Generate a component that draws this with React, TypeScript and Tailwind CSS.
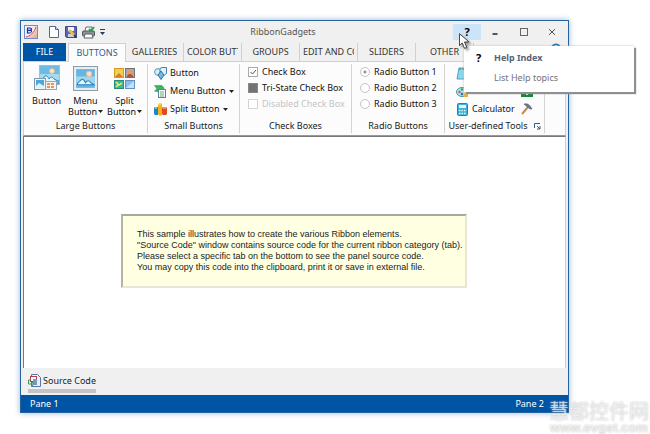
import type { ReactNode } from "react";

function PictureIcon({ className }: { className: string }) {
  return (
    <svg className={className} viewBox="0 0 24 24">
      <rect x="0.5" y="0.5" width="23" height="23" fill="#e9eef2" stroke="#8e9eac" />
      <rect x="3" y="3" width="18" height="18" fill="#63b5e2" />
      <rect x="3" y="10" width="18" height="7" fill="#9ed6ee" />
      <circle cx="15.5" cy="7.500" r="2.500" fill="#fbe3c4" stroke="#f2b99a" />
      <path d="M4 18c0-3 3-3 4-5 2-1 3 1 4 3 2-3 4-2 5 0l3 2z" fill="#e8f6fb" stroke="#2f83bd" />
    </svg>
  );
}

function StackedPicturesIcon() {
  return (
    <svg className="h-[26px] w-[26px]" viewBox="0 0 26 26">
      <rect x="5.5" y="0.5" width="20" height="19" fill="#6bbbe5" stroke="#a9bccb" />
      <rect x="6" y="9" width="19" height="6" fill="#a5daf0" />
      <circle cx="18" cy="6" r="2.5" fill="#fbe8c8" stroke="#f0b697" />
      <path d="M7 16c0-3 3-2 4-5 2-1 3 1 4 3 2-3 4-2 5 0l4 2v3H7z" fill="#e5f4fa" stroke="#2f83bd" />
      <rect x="0.5" y="13.5" width="11" height="11" fill="#eef5f9" stroke="#8299ad" />
      <path d="M2 15h8v8H2z" fill="#4fa6d8" />
      <path d="M2 21l3-3 5 3v2H2z" fill="#dff2fa" />
      <rect x="11.5" y="16.5" width="11" height="8" fill="#f7f4f0" stroke="#9aa7b3" />
      <path d="M13 19h7M13 22h7" stroke="#e3975f" strokeWidth="2" strokeDasharray="3 1" />
    </svg>
  );
}

function GalleryIcon() {
  return (
    <svg className="h-[23px] w-[23px]" viewBox="0 0 23 23">
      <rect x="1.5" y="1.5" width="9" height="9" fill="#f6cc4f" stroke="#d69a20" />
      <path d="M2 10l4-4 4 4z" fill="#d67c2e" />
      <rect x="12.5" y="1.5" width="9" height="9" fill="#a9aaa8" stroke="#77706b" />
      <circle cx="17" cy="5" r="2" fill="#ee9a51" />
      <path d="M14 10c0-4 6-4 6 0z" fill="#b94d30" />
      <rect x="1.5" y="13.5" width="9" height="8" fill="#43b597" stroke="#258d79" />
      <path d="M3 15l3 3 3-2M3 20l2-2" stroke="#f2e779" fill="none" strokeWidth="1.5" />
      <rect x="12.5" y="13.5" width="9" height="8" fill="#8bbdea" stroke="#628fc7" />
      <path d="M13 21l8-7v7z" fill="#c7e1f7" />
    </svg>
  );
}

function ShapesIcon() {
  return (
    <svg className="size-[13px]" viewBox="0 0 13 13">
      <circle cx="4" cy="5" r="3.4" fill="#d9eef8" stroke="#5797c0" />
      <path d="M6 1.5l2-1h4.500v6l-2 1.500H6z" fill="#e1f2fa" stroke="#3f83b3" />
      <path d="M7 4l3 4-3 4.500L4 8z" fill="#76b8e0" stroke="#316fa4" />
    </svg>
  );
}

function SheetIcon() {
  return (
    <svg className="size-[13px]" viewBox="0 0 13 13">
      <path d="M0.500 0.500H8L10 3v2H5v2L0.500 6 3 4z" fill="#3cb65a" stroke="#1e8d45" strokeWidth="0.500" />
      <rect x="4.500" y="4.500" width="7" height="8" fill="#f6fafc" stroke="#5b8498" />
      <path d="M6 7h4M6 9h4M6 11h4" stroke="#73aa82" />
    </svg>
  );
}

function ChartIcon() {
  return (
    <svg className="size-[13px]" viewBox="0 0 13 13">
      <path d="M0 5l1-1h3v8H1l-1-1z" fill="#1789cd" />
      <path d="M4 2l1-1.500h3v12H5L4 11z" fill="#f4b315" />
      <path d="M8 5l1-1h3l1 1v6l-1 1H9l-1-1z" fill="#e04a1e" />
      <path d="M1 5h2M5 2h2M9 5h3" stroke="#ffe3a0" />
    </svg>
  );
}

function Caret() {
  return (
    <svg className="h-[3px] w-[5px] shrink-0" viewBox="0 0 5 3">
      <path d="M0 0h5L2.500 3z" fill="#222" />
    </svg>
  );
}

function AppLogo() {
  return (
    <svg className="size-[14px]" viewBox="0 0 14 14">
      <defs>
        <linearGradient id="logo" x1="0" y1="0" x2="1" y2="1">
          <stop offset="0.3" stopColor="#eef3ff" />
          <stop offset="1" stopColor="#f0a07a" />
        </linearGradient>
      </defs>
      <rect x="0.5" y="0.5" width="13" height="13" fill="url(#logo)" stroke="#6c8bd0" />
      <path d="M3.500 3v5M3 3h3c2 0 2 2 0 2.400H4M6 5.400c2.500 0 2.500 2.600 0 2.600H3" fill="none" stroke="#1d2d9c" strokeWidth="1.200" />
      <path d="M2 12c4-1 8-4 10-10" fill="none" stroke="#c25068" />
      <path d="M1 10c4 1 8-2 9-7" fill="none" stroke="#fff" />
    </svg>
  );
}

function QuickAccess() {
  return (
    <div className="flex items-center">
      <AppLogo />
      <button aria-label="New" className="ml-[11px]">
        <svg className="h-[12px] w-[10px]" viewBox="0 0 10 12">
          <path d="M0.500 0.500h6l3 3v8h-9z" fill="#fff" stroke="#536a83" />
          <path d="M6.500 0.500v3h3" fill="#c7dcf0" stroke="#536a83" />
        </svg>
      </button>
      <button aria-label="Save" className="ml-[6px]">
        <svg className="size-[12px]" viewBox="0 0 12 12">
          <path d="M0.500 0.500h11v11h-10l-1-1z" fill="#5a67b0" stroke="#3f488e" />
          <rect x="3" y="1" width="6" height="4" fill="#f3f5fd" />
          <rect x="3" y="8" width="6" height="3" fill="#cbd2e8" />
          <path d="M3 5l2-2 5 5-2 2z" fill="#e9b94d" />
          <path d="M9 9l2.500 2.500" stroke="#333" strokeWidth="1.500" />
        </svg>
      </button>
      <button aria-label="Print" className="ml-[5px]">
        <svg className="size-[13px]" viewBox="0 0 13 13">
          <path d="M3 5l1-4h6v4" fill="#f8fbff" stroke="#65717a" />
          <rect x="0.500" y="5" width="12" height="5" rx="1" fill="#8b9399" stroke="#515b61" />
          <path d="M3 8h7l1 4H2z" fill="#fff" stroke="#59636a" />
          <path d="M7 3l2 2 3-4" stroke="#26a247" strokeWidth="2" fill="none" />
        </svg>
      </button>
      <button aria-label="Customize toolbar" className="ml-[5px]">
        <svg className="h-[6px] w-[5px]" viewBox="0 0 5 6">
          <path d="M0 0h5v1H0zM0 3h5L2.500 6z" fill="#253d58" />
        </svg>
      </button>
    </div>
  );
}

function HelpMenu() {
  return (
    <div role="menu" className="absolute top-[22px] left-[11px] z-10 h-[46px] w-[170px] bg-white pl-[12px] text-[9px] shadow-[2px_2px_1px_#8f8f8f,0_0_2px_#bbb]">
      <div className="grid grid-cols-[18px_1fr] pt-[4px] leading-[16px]">
        <b className="text-[11px] text-black">?</b>
        <button role="menuitem" className="text-left font-bold text-[#596270]">Help Index</button>
      </div>
      <button role="menuitem" className="mt-[4px] ml-[18px] block leading-[16px] text-[#77717a]">List Help topics</button>
    </div>
  );
}

function Pointer() {
  return (
    <svg className="absolute top-[9px] left-[6px] z-20 h-[17px] w-[11px] drop-shadow-[2px_2px_1px_#999]" viewBox="0 0 12 18">
      <path d="M0.500 0.500v13l3-3 2.500 6 2.500-1-2.500-6h5z" fill="#fff" stroke="#333" />
    </svg>
  );
}

function TitleBar() {
  return (
    <header className="grid h-[22px] grid-cols-[1fr_auto_1fr] items-center pr-[2px] pl-[3px]">
      <QuickAccess />
      <h1 className="pr-[24px] text-[9px] text-[#555]">RibbonGadgets</h1>
      <div className="flex justify-end">
        <div className="relative">
          <button aria-label="Help" className="block h-[16px] w-[28px] bg-[#cce4f7] text-[11px] leading-[16px] font-bold text-black">?</button>
          <Pointer />
          <HelpMenu />
        </div>
        <button aria-label="Minimize" className="flex h-[16px] w-[28px] items-center justify-center">
          <svg className="size-[8px]" viewBox="0 0 8 8"><path d="M1.500 6h5" stroke="#555" strokeWidth="2" /></svg>
        </button>
        <button aria-label="Maximize" className="flex h-[16px] w-[29px] items-center justify-center">
          <svg className="size-[8px]" viewBox="0 0 8 8"><rect x="0.500" y="0.500" width="7" height="7" fill="none" stroke="#666" /></svg>
        </button>
        <button aria-label="Close" className="flex h-[16px] w-[28px] items-center justify-center">
          <svg className="size-[8px]" viewBox="0 0 8 8"><path d="M1 1l6 6M7 1L1 7" stroke="#555" /></svg>
        </button>
      </div>
    </header>
  );
}

const tabs = ["GALLERIES", "COLOR BUTTONS", "GROUPS", "EDIT AND COMBO", "SLIDERS", "OTHER"];

function Tabs() {
  return (
    <nav className="flex h-[18px] text-[9px] leading-[18px] text-[#333]">
      <button className="ml-[2px] w-[43px] bg-[#0054a4] text-white">FILE</button>
      <button className="z-[1] -mb-px ml-[2px] w-[58px] border border-b-0 border-[#d0d0d0] bg-[#fcfcfc] text-[#2f5d8c]">BUTTONS</button>
      {tabs.map((t) => (
        <button key={t} className="w-[58px] overflow-hidden border-r border-[#d0d0d0] px-[3px] whitespace-nowrap">
          <span className={t.length > 10 ? "block overflow-hidden text-left" : "block"}>{t}</span>
        </button>
      ))}
      <button aria-label="About" className="mr-[6px] ml-auto flex items-start">
        <svg className="size-[12px]" viewBox="0 0 12 12">
          <circle cx="6" cy="6" r="5.500" fill="#1473b9" />
          <path d="M4 4.500c0-2.500 4-2.500 4 0C8 6 6 6 6 7.500M6 9v1" stroke="#fff" fill="none" />
        </svg>
      </button>
    </nav>
  );
}

function Group({ title, width, children, launcher }: { title: string; width: string; children: ReactNode; launcher?: boolean }) {
  return (
    <section className={`${width} my-[2px] flex flex-col border-r border-[#d3d3d3] whitespace-nowrap`}>
      <div className="h-[55px]">{children}</div>
      <h2 className="flex items-center justify-center gap-[6px] text-[9px] leading-[14px] text-[#222]">
        {title}
        {launcher && (
          <button aria-label="Tool options">
            <svg className="size-[7px]" viewBox="0 0 7 7">
              <path d="M0.500 5V0.500H6M3 3l3 3M6 3v3H3" fill="none" stroke="#385b80" />
            </svg>
          </button>
        )}
      </h2>
    </section>
  );
}

function LargeButton({ icon, top, bottom }: { icon: ReactNode; top: string; bottom?: string }) {
  return (
    <button className="flex w-[39px] flex-col items-center leading-[11px]">
      <span className="flex h-[28px] items-center">{icon}</span>
      <span className="mt-[3px]">{top}</span>
      {bottom && <span className="flex items-center gap-px">{bottom}<Caret /></span>}
    </button>
  );
}

function SmallButton({ icon, text, menu }: { icon: ReactNode; text: string; menu?: boolean }) {
  return (
    <button className="flex h-[18px] items-center gap-[3px]">
      {icon}{text}{menu && <Caret />}
    </button>
  );
}

function Checks() {
  return (
    <div className="pl-[8px] leading-[16px]">
      <label className="flex items-center gap-[4px]">
        <span className="grid size-[10px] *:col-start-1 *:row-start-1">
          <input type="checkbox" defaultChecked className="size-[10px] appearance-none border border-[#aaa] bg-white" />
          <svg className="pointer-events-none size-[10px]" viewBox="0 0 10 10"><path d="M2.500 5l2 2 3.500-4" fill="none" stroke="#555" /></svg>
        </span>
        Check Box
      </label>
      <label className="flex items-center gap-[4px]">
        <input type="checkbox" className="size-[10px] appearance-none border border-[#888] bg-[#737373]" />
        Tri-State Check Box
      </label>
      <label className="flex items-center gap-[4px] text-[#c4c4c4]">
        <input type="checkbox" disabled className="size-[10px] appearance-none border border-[#d4d4d4] bg-white" />
        Disabled Check Box
      </label>
    </div>
  );
}

function Radios() {
  return (
    <div className="pl-[8px] leading-[16px]">
      {[1, 2, 3].map((n) => (
        <label key={n} className="flex items-center gap-[4px]">
          <input
            type="radio"
            name="radio"
            defaultChecked={n === 1}
            className="size-[10px] appearance-none rounded-full border border-[#c4c4c4] bg-white checked:bg-[radial-gradient(circle,#999_1px,#fff_2px)]"
          />
          Radio Button {n}
        </label>
      ))}
    </div>
  );
}

function Tools() {
  return (
    <div className="flex justify-between pr-[11px] pl-[11px]">
      <div>
        <SmallButton
          text="Notepad"
          icon={
            <svg className="size-[13px]" viewBox="0 0 13 13">
              <path d="M3 1h9l-2 11H1z" fill="#8bd7e9" stroke="#47a8c5" />
              <path d="M4 1v2M7 1v2M10 1v2" stroke="#54747f" />
            </svg>
          }
        />
        <SmallButton
          text="Paint"
          icon={
            <svg className="size-[13px]" viewBox="0 0 13 13">
              <ellipse cx="6" cy="7" rx="5.500" ry="4.500" fill="#b3e0eb" stroke="#3c9cb5" />
              <circle cx="3.500" cy="7" r="1.200" fill="#e34d41" />
              <circle cx="6" cy="4.500" r="1.200" fill="#34a650" />
              <circle cx="6" cy="9" r="1.200" fill="#2665bd" />
              <path d="M8 9l4-2v5H8z" fill="#f1ae34" />
            </svg>
          }
        />
        <SmallButton
          text="Calculator"
          icon={
            <svg className="size-[13px]" viewBox="0 0 13 13">
              <rect x="1.500" y="0.500" width="10" height="12" rx="1" fill="#3fb0d6" stroke="#1d86b0" />
              <rect x="3" y="2" width="7" height="3" fill="#e3f8fc" />
              <path d="M3 7.500h7M3 10.500h7" stroke="#e3f8fc" strokeWidth="1.500" strokeDasharray="1.500 1" />
            </svg>
          }
        />
      </div>
      <div className="flex flex-col">
        <span className="h-[18px]" />
        <button aria-label="Play" className="flex h-[18px] items-center">
          <svg className="size-[12px]" viewBox="0 0 12 12"><rect width="12" height="12" fill="#16883a" /><path d="M4 7l2 3 3-4" stroke="#fff" fill="none" /></svg>
        </button>
        <button aria-label="Build" className="flex h-[18px] items-center">
          <svg className="size-[12px]" viewBox="0 0 12 12">
            <path d="M1 11l6-7" stroke="#c28c50" strokeWidth="2" />
            <path d="M3 1c4-1 6 1 8 5L9 6 4 2z" fill="#68798c" stroke="#45566c" strokeWidth="0.500" />
          </svg>
        </button>
      </div>
    </div>
  );
}

function Ribbon() {
  return (
    <div className="mx-[2px] flex h-[75px] border border-[#d0d0d0] border-b-[#999] bg-[#fcfcfc] text-[9px] text-[#111]">
      <Group title="Large Buttons" width="w-[124px]">
        <div className="flex pl-[3px]">
          <LargeButton icon={<StackedPicturesIcon />} top="Button" />
          <LargeButton icon={<PictureIcon className="size-[25px]" />} top="Menu" bottom="Button" />
          <LargeButton icon={<GalleryIcon />} top="Split" bottom="Button" />
        </div>
      </Group>
      <Group title="Small Buttons" width="w-[92px]">
        <div className="pl-[6px]">
          <SmallButton icon={<ShapesIcon />} text="Button" />
          <SmallButton icon={<SheetIcon />} text="Menu Button" menu />
          <SmallButton icon={<ChartIcon />} text="Split Button" menu />
        </div>
      </Group>
      <Group title="Check Boxes" width="w-[112px]"><Checks /></Group>
      <Group title="Radio Buttons" width="w-[93px]"><Radios /></Group>
      <Group title="User-defined Tools" width="w-[100px]" launcher><Tools /></Group>
    </div>
  );
}

function Workspace() {
  return (
    <main className="mx-[2px] flex flex-1 items-center border border-[#777] border-b-0 border-r-[#ccc] bg-white pb-[3px] pl-[97px]">
      <div className="w-[346px] border-2 border-t-[#aaa89b] border-r-[#e8e6d4] border-b-[#e8e6d4] border-l-[#b5b3a6] bg-[#ffffe1] px-[14px] py-[13px] font-['Liberation_Sans',Arial,sans-serif] text-[9px] leading-[11px] whitespace-nowrap text-[#222]">
        <p>This sample illustrates how to create the various Ribbon elements.</p>
        <p>"Source Code" window contains source code for the current ribbon category (tab).</p>
        <p>Please select a specific tab on the bottom to see the panel source code.</p>
        <p>You may copy this code into the clipboard, print it or save in external file.</p>
      </div>
    </main>
  );
}

function SourceTab() {
  return (
    <div className="h-[27px] pt-[4px] pl-[7px]">
      <button className="flex h-[21px] items-center gap-[2px] border-b-4 border-[#c4c4c4] text-[9px] text-[#222]">
        <svg className="size-[13px]" viewBox="0 0 13 13">
          <path d="M3.500 0.500h6l3 3v9h-9z" fill="#e8f0fa" stroke="#5578a6" />
          <rect x="2.500" y="2.500" width="6" height="5" fill="#fff" stroke="#b83e4e" />
          <path d="M5 5h4v6H5z" fill="#7996c7" />
          <path d="M3 6H0.500v4H6M4 8l2 2-2 2" fill="none" stroke="#3b9a4c" />
        </svg>
        Source Code
      </button>
    </div>
  );
}

function StatusBar() {
  return (
    <footer className="flex h-[17px] items-center justify-between bg-[#0054a4] pr-[7px] pl-[9px] text-[9px] text-white">
      <span>Pane 1</span>
      <span className="flex items-center gap-[9px]">
        Pane 2
        <svg className="size-[8px]" viewBox="0 0 8 8"><path d="M1 5v3M4 3v5M7 1v7" stroke="#9fc4e3" /></svg>
      </span>
    </footer>
  );
}

export default function App() {
  return (
    <div className="relative flex min-h-screen flex-col bg-white pt-[20px] pr-[81px] pb-[21px] pl-[20px] font-['Noto_Sans','Open_Sans',sans-serif]">
      <div className="flex flex-1 flex-col border border-[#2463a0] bg-[#f0f0f0] shadow-[0_0_6px_#9bb7d5]">
        <TitleBar />
        <Tabs />
        <Ribbon />
        <Workspace />
        <SourceTab />
        <StatusBar />
      </div>
      <div className="pointer-events-none absolute right-px bottom-0 text-center font-['Noto_Sans_CJK_SC',sans-serif] text-white/60 [text-shadow:0_0_2px_#bbb]">
        <p className="text-[20px] leading-[22px]">慧都控件网</p>
        <p className="font-['Liberation_Sans',sans-serif] text-[13px] leading-[12px] font-bold">www.evget.com</p>
      </div>
    </div>
  );
}
